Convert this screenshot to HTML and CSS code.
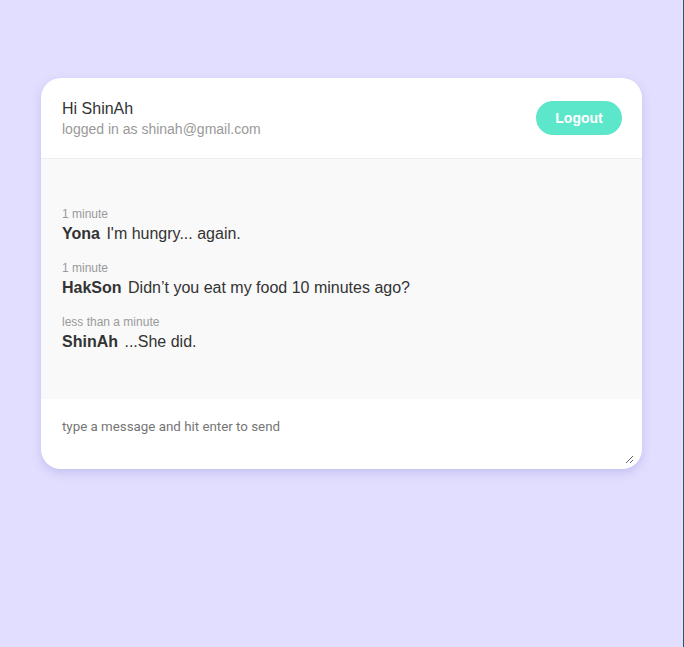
FILE: index.html
```html
<!DOCTYPE html>
<html>
<head>
<meta charset="utf-8">
<link rel="stylesheet" href="styles.css">
</head>
<body>
<div class="page">
  <div class="card">
    <header class="header">
      <div class="user">
        <div class="greet">Hi ShinAh</div>
        <div class="email">logged in as shinah@gmail.com</div>
      </div>
      <button class="logout">Logout</button>
    </header>
    <div class="messages">
      <div class="msg">
        <div class="time">1 minute</div>
        <div class="line"><span class="name">Yona</span> <span class="text">I'm hungry... again.</span></div>
      </div>
      <div class="msg">
        <div class="time">1 minute</div>
        <div class="line"><span class="name">HakSon</span> <span class="text">Didn’t you eat my food 10 minutes ago?</span></div>
      </div>
      <div class="msg">
        <div class="time">less than a minute</div>
        <div class="line"><span class="name">ShinAh</span> <span class="text">...She did.</span></div>
      </div>
    </div>
    <div class="composer">
      <textarea class="input" placeholder="type a message and hit enter to send" autofocus></textarea>
    </div>
  </div>
</div>
</body>
</html>
```
FILE: styles.css
```css
html, body {
  margin: 0;
  padding: 0;
  height: 100%;
}
body {
  background: #e1deff;
  font-family: "Liberation Sans", Arial, sans-serif;
  color: #333;
  border-right: 1px solid #2b5a5c;
  box-sizing: border-box;
}
.page {
  padding-top: 78px;
  display: flex;
  justify-content: center;
}
.card {
  width: 601px;
  background: #fff;
  border-radius: 20px;
  overflow: hidden;
  box-shadow: 0 4px 10px rgba(120, 110, 200, 0.25);
}
.header {
  height: 81px;
  box-sizing: border-box;
  padding: 0 20px 0 21px;
  display: flex;
  align-items: center;
  justify-content: space-between;
  border-bottom: 1px solid #eeeeee;
}
.greet {
  font-size: 16px;
  color: #333;
  line-height: 20px;
}
.email {
  font-size: 14px;
  color: #999;
  line-height: 18px;
  margin-top: 1px;
}
.logout {
  width: 86px;
  height: 34px;
  border: none;
  border-radius: 17px;
  background: #5ce6ca;
  color: #fff;
  font-family: "Liberation Sans", Arial, sans-serif;
  font-weight: bold;
  font-size: 14px;
}
.messages {
  background: #f9f9f9;
  height: 240px;
  box-sizing: border-box;
  padding: 48px 21px 0;
  display: flex;
  flex-direction: column;
  gap: 16px;
}
.time {
  font-size: 12px;
  color: #999;
  line-height: 14px;
}
.line {
  font-size: 16px;
  line-height: 22px;
  margin-top: 2px;
  color: #333;
}
.name {
  font-weight: bold;
  margin-right: 2px;
}
.composer {
  height: 70px;
  box-sizing: border-box;
  padding: 18px 8px 0 21px;
}
.input {
  display: block;
  width: 100%;
  height: 47px;
  box-sizing: border-box;
  border: none;
  outline: none;
  padding: 2px 0;
  margin: 0;
  font-family: Roboto, "Liberation Sans", sans-serif;
  font-size: 13.33px;
  color: #333;
  background: transparent;
}
.input::placeholder {
  color: #757575;
}
```
